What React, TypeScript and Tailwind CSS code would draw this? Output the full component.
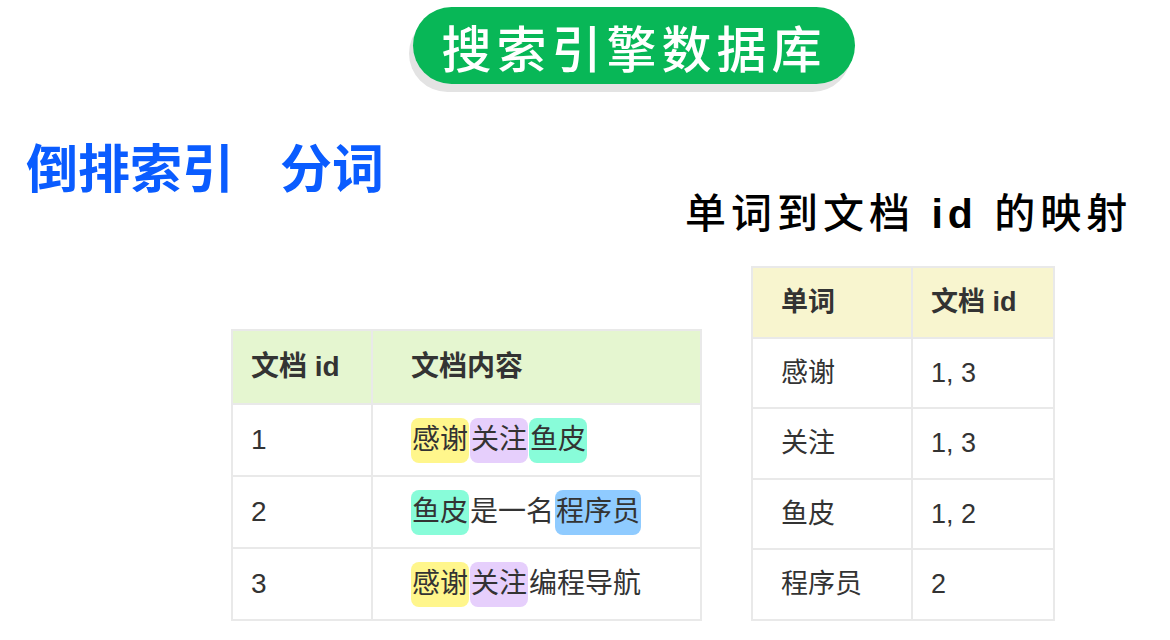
import React from "react";

const cjk = "[font-family:'Liberation_Sans','Noto_Sans_CJK_SC',sans-serif]";

type Chunk = { t: string; c?: string };

const chipColor: Record<string, string> = {
  y: "bg-[#fff68c]",
  p: "bg-[#e6cffc]",
  g: "bg-[#88fcd9]",
  b: "bg-[#8fcbff]",
};

const docs: { id: string; parts: Chunk[] }[] = [
  { id: "1", parts: [{ t: "感谢", c: "y" }, { t: "关注", c: "p" }, { t: "鱼皮", c: "g" }] },
  { id: "2", parts: [{ t: "鱼皮", c: "g" }, { t: "是一名" }, { t: "程序员", c: "b" }] },
  { id: "3", parts: [{ t: "感谢", c: "y" }, { t: "关注", c: "p" }, { t: "编程导航" }] },
];

const words = [
  ["感谢", "1, 3", "h-[70px]"],
  ["关注", "1, 3", "h-[71px]"],
  ["鱼皮", "1, 2", "h-[70px]"],
  ["程序员", "2", "h-[71px]"],
];

const DocTable = () => (
  <table className="border-collapse border-2 border-[#e9e9e9] text-[#333] w-[471px]">
    <thead>
      <tr className="bg-[#e5f6d0] h-[74px]">
        <th className="border-2 border-[#e9e9e9] w-[140px] text-left pl-[18px] text-[28px] font-semibold">
          文档 id
        </th>
        <th className="border-2 border-[#e9e9e9] text-left pl-[38px] text-[28px] font-semibold">
          文档内容
        </th>
      </tr>
    </thead>
    <tbody>
      {docs.map((d) => (
        <tr key={d.id} className="h-[72px]">
          <td className="border-2 border-[#e9e9e9] pl-[18px] text-[28px]">{d.id}</td>
          <td className="border-2 border-[#e9e9e9] pl-[38px] text-[28px]">
            <div className="flex items-center">
              {d.parts.map((p, i) =>
                p.c ? (
                  <span
                    key={i}
                    className={`${chipColor[p.c]} rounded-[8px] h-[45px] px-[1px] flex items-center mr-[1px]`}
                  >
                    {p.t}
                  </span>
                ) : (
                  <span key={i} className="mr-[1px]">
                    {p.t}
                  </span>
                )
              )}
            </div>
          </td>
        </tr>
      ))}
    </tbody>
  </table>
);

const WordTable = () => (
  <table className="border-collapse border-2 border-[#e9e9e9] text-[#333] w-[304px]">
    <thead>
      <tr className="bg-[#f8f5cf] h-[71px]">
        <th className="border-2 border-[#e9e9e9] w-[160px] text-left pl-[28px] text-[27px] font-semibold">
          单词
        </th>
        <th className="border-2 border-[#e9e9e9] text-left pl-[18px] text-[27px] font-semibold">
          文档 id
        </th>
      </tr>
    </thead>
    <tbody>
      {words.map(([w, ids, h]) => (
        <tr key={w} className={h}>
          <td className="border-2 border-[#e9e9e9] pl-[28px] text-[27px]">{w}</td>
          <td className="border-2 border-[#e9e9e9] pl-[18px] text-[27px]">{ids}</td>
        </tr>
      ))}
    </tbody>
  </table>
);

export default function App() {
  return (
    <div className={`w-[1170px] h-[640px] bg-white overflow-hidden ${cjk}`}>
      <div className="pl-[413px] pt-[7px]">
        <div className="w-[442px] h-[77px] rounded-full bg-[#08b757] shadow-[-4px_8px_0_#e3e3e3] flex items-center justify-center">
          <span className="text-white text-[50px] leading-none tracking-[5px] font-medium [font-family:'Noto_Sans_CJK_SC',sans-serif]">
            搜索引擎数据库
          </span>
        </div>
      </div>

      <div className="pl-[26px] mt-[56px] h-[52px] flex text-[#0a5cff] text-[52px] leading-[52px] font-bold [font-family:'Noto_Sans_CJK_SC',sans-serif]">
        <span>倒排索引</span>
        <span className="ml-[46px]">分词</span>
      </div>

      <div className="pl-[685px] mt-[2px] text-black text-[41px] leading-[41px] font-medium tracking-[5px] whitespace-nowrap">
        单词到文档 <span className="font-semibold">id</span> 的映射
      </div>

      <div className="flex items-end pl-[231px] gap-[49px] mt-[31px]">
        <DocTable />
        <WordTable />
      </div>

      <div className="mt-[19px] ml-[3px] w-[7px] h-[2px] bg-[#333]" />
    </div>
  );
}
